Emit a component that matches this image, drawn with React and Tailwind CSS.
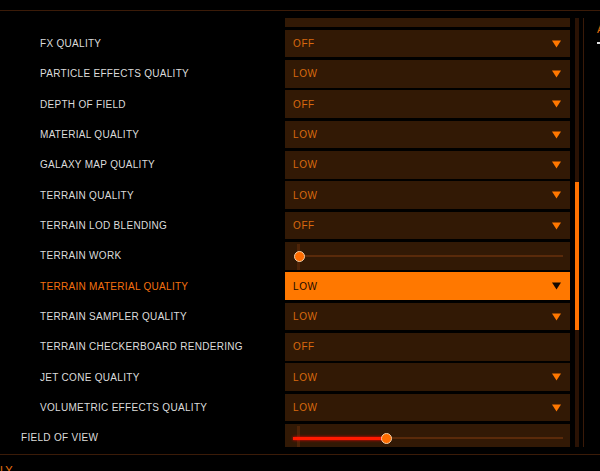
import React from 'react'

const rows = [
  { label: '', value: '', arrow: false, stub: true },
  { label: 'FX QUALITY', value: 'OFF', arrow: true },
  { label: 'PARTICLE EFFECTS QUALITY', value: 'LOW', arrow: true },
  { label: 'DEPTH OF FIELD', value: 'OFF', arrow: true },
  { label: 'MATERIAL QUALITY', value: 'LOW', arrow: true },
  { label: 'GALAXY MAP QUALITY', value: 'LOW', arrow: true },
  { label: 'TERRAIN QUALITY', value: 'LOW', arrow: true },
  { label: 'TERRAIN LOD BLENDING', value: 'OFF', arrow: true },
  { label: 'TERRAIN WORK', slider: 0 },
  { label: 'TERRAIN MATERIAL QUALITY', value: 'LOW', arrow: true, active: true },
  { label: 'TERRAIN SAMPLER QUALITY', value: 'LOW', arrow: true },
  { label: 'TERRAIN CHECKERBOARD RENDERING', value: 'OFF', arrow: false },
  { label: 'JET CONE QUALITY', value: 'LOW', arrow: true },
  { label: 'VOLUMETRIC EFFECTS QUALITY', value: 'LOW', arrow: true },
  { label: 'FIELD OF VIEW', slider: 95, outdent: true },
]

const Arrow = ({ dark }) => (
  <svg width="9" height="8" viewBox="0 0 9 8" className="mr-[9px] shrink-0">
    <polygon points="0,0.5 9,0.5 4.5,7.5" fill={dark ? '#140800' : '#ff7700'} />
  </svg>
)

const Slider = ({ fill }) => (
  <div className="relative h-full w-full">
    <div className="absolute left-[12px] top-[2px] bottom-0 w-[3px] bg-[#4e2408]" />
    <div className="absolute left-[14px] right-[7px] top-[13px] h-[2px] bg-[#5a2a0a]" />
    {fill > 0 && (
      <div
        className="absolute left-[8px] top-[12.5px] h-[3px] bg-[#ff1a00] shadow-[0_0_3px_#ff0000]"
        style={{ width: fill }}
      />
    )}
    <div
      className="absolute top-[8.5px] h-[11px] w-[11px] rounded-full bg-[#ff6c00] border border-[#f3cfa8]"
      style={{ left: 8.5 + (fill > 0 ? fill - 8 : 0) }}
    />
  </div>
)

const Row = ({ row, first }) => (
  <div className={`flex h-[27.5px] w-[570px] shrink-0 items-center ${first ? '-mt-[18.5px]' : ''}`}>
    <div
      className={`w-[285px] shrink-0 whitespace-nowrap ${row.outdent ? 'pl-[21px]' : 'pl-[40px]'} text-[10px] tracking-[0.3px] ${
        row.active ? 'text-[#f5700f]' : 'text-[#dcdcdc]'
      }`}
    >
      {row.label}
    </div>
    <div
      className={`flex h-full w-[285px] shrink-0 items-center justify-between ${
        row.active ? 'bg-[#ff7800]' : 'bg-[#321905]'
      }`}
    >
      {row.slider !== undefined ? (
        <Slider fill={row.slider} />
      ) : (
        <>
          <span
            className={`pl-[8px] text-[10px] tracking-[0.6px] ${
              row.active ? 'text-[#1a0a00]' : 'text-[#d9690e]'
            }`}
          >
            {row.value}
          </span>
          {row.arrow && <Arrow dark={row.active} />}
        </>
      )}
    </div>
  </div>
)

export default function App() {
  return (
    <div className="h-[471px] w-[600px] overflow-hidden bg-black font-['Liberation_Sans',Arial,sans-serif]">
      <div className="h-[10px]" />
      <div className="h-px bg-[#3b1b08]" />
      <div className="flex h-[443px]">
        <div className="h-[436px] w-[570px] shrink-0 overflow-hidden pt-[7px]">
          <div className="flex h-[429px] flex-col gap-[2.83px] overflow-hidden">
            {rows.map((r, i) => (
              <Row key={i} row={r} first={i === 0} />
            ))}
          </div>
        </div>
        <div className="ml-[5px] mt-[7px] h-[429px] w-[4px] shrink-0 bg-[#2a1204]">
          <div className="mt-[164px] h-[148px] w-full bg-[#ff7200]" />
        </div>
        <div className="ml-[4px] mt-[7px] h-[429px] w-px shrink-0 bg-[#3a1a08]" />
        <div className="ml-[13px] mt-[11px] flex shrink-0 flex-col">
          <span className="whitespace-nowrap text-[11px] leading-[14px] text-[#e8700f]">ADVANCED</span>
          <div className="mt-[6px] h-[2px] w-[20px] bg-[#e0e0e0]" />
        </div>
      </div>
      <div className="h-px bg-[#3b1b08]" />
      <div className="mt-[9px] text-[11px] leading-[12px] text-[#e8700f]">LY</div>
    </div>
  )
}
